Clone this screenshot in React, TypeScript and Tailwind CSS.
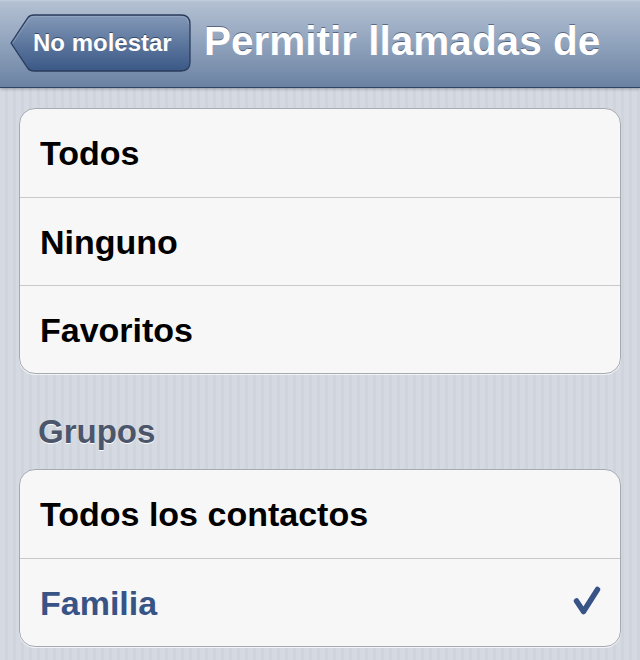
import React from "react";

function BackButton() {
  return (
    <div className="relative mb-[2px] flex h-[58px] w-[181px] shrink-0 items-center pl-[23px]">
      <svg
        className="absolute left-0 top-0"
        width="181"
        height="58"
        viewBox="0 0 181 58"
      >
        <defs>
          <linearGradient id="bb" x1="0" y1="0" x2="0" y2="1">
            <stop offset="0" stopColor="#8499b8" />
            <stop offset="0.5" stopColor="#5d779e" />
            <stop offset="1" stopColor="#3b5886" />
          </linearGradient>
        </defs>
        <path
          d="M1 29 L18 3.5 Q20 1 24 1 H171 Q180 1 180 10 V48 Q180 57 171 57 H24 Q20 57 18 54.5 Z"
          fill="url(#bb)"
          stroke="#2b3d5c"
          strokeWidth="1.3"
        />
        <path
          d="M3 29 L19 5 Q21 2.5 24 2.5 H171 Q178.5 2.5 178.5 10"
          fill="none"
          stroke="#a6b6cd"
          strokeOpacity="0.45"
          strokeWidth="1"
        />
      </svg>
      <span className="relative text-[24px] font-bold leading-[28px] text-white [text-shadow:0_-1px_0_rgba(20,35,60,0.6)]">
        No molestar
      </span>
    </div>
  );
}

function Row({
  label,
  first,
  selected,
}: {
  label: string;
  first?: boolean;
  selected?: boolean;
}) {
  return (
    <div
      className={`flex h-[88px] items-center justify-between pl-[20px] pr-[20px] ${
        first ? "" : "border-t border-[#c9c9cb]"
      }`}
    >
      <span
        className={`text-[34px] font-bold leading-[40px] ${
          selected ? "text-[#385487]" : "text-black"
        }`}
      >
        {label}
      </span>
      {selected && (
        <svg width="28" height="30" viewBox="0 0 28 30" className="mb-[3px] mr-[-1px]">
          <path
            d="M3.5 15 L10.5 25.5 L24.5 3.5"
            fill="none"
            stroke="#385487"
            strokeWidth="5.5"
            strokeLinecap="round"
            strokeLinejoin="round"
          />
        </svg>
      )}
    </div>
  );
}

export default function App() {
  return (
    <div
      className="h-[660px] w-[640px] overflow-hidden bg-[repeating-linear-gradient(90deg,#d5dae2_0px,#d5dae2_5px,#cfd4dd_5px,#cfd4dd_8px)]"
      style={{ fontFamily: '"Liberation Sans", Arial, sans-serif' }}
    >
      <div className="relative z-10 flex h-[88px] items-center border-b border-[#2f4463] bg-[linear-gradient(180deg,#c3cedd_0px,#b3c0d2_2px,#8fa2bc_45px,#6a82a2_87px)] pl-[10px] shadow-[0_1px_3px_rgba(0,0,0,0.3)]">
        <BackButton />
        <div className="mb-[6px] ml-[13px] whitespace-nowrap text-[40.5px] font-bold leading-[48px] text-white [text-shadow:0_-1px_0_rgba(30,45,70,0.55)]">
          Permitir llamadas de
        </div>
      </div>

      <div className="px-[19px] pt-[20px]">
        <div className="overflow-hidden rounded-[16px] border border-[#a6aab2] bg-[#f7f7f7] shadow-[0_1px_0_rgba(255,255,255,0.7)]">
          <Row label="Todos" first />
          <Row label="Ninguno" />
          <Row label="Favoritos" />
        </div>

        <div className="pb-[17px] pl-[19px] pt-[38px] text-[33px] font-bold leading-[40px] text-[#4c566b] [text-shadow:0_1px_0_rgba(255,255,255,0.9)]">
          Grupos
        </div>

        <div className="overflow-hidden rounded-[16px] border border-[#a6aab2] bg-[#f7f7f7] shadow-[0_1px_0_rgba(255,255,255,0.7)]">
          <Row label="Todos los contactos" first />
          <Row label="Familia" selected />
        </div>
      </div>
    </div>
  );
}
